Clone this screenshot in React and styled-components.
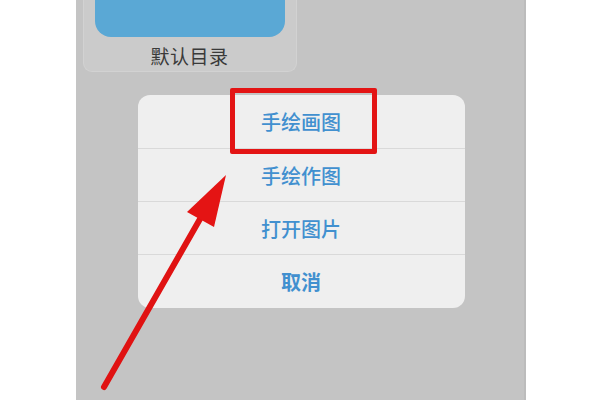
import styled, { createGlobalStyle } from "styled-components";

const Global = createGlobalStyle`
  html, body { margin: 0; padding: 0; background: #ffffff; }
  body { font-family: "Noto Sans CJK SC", "Noto Sans", sans-serif; }
`;

const Page = styled.div`
  position: relative;
  width: 600px;
  height: 400px;
  overflow: hidden;
  display: flex;
  justify-content: center;
  background: #ffffff;
`;

const Panel = styled.div`
  width: 450px;
  height: 400px;
  margin-left: 1px;
  background: #c4c4c4;
  border-right: 2px solid #bcbcbc;
  box-sizing: border-box;
  display: flex;
  flex-direction: column;
`;

const FolderCard = styled.div`
  margin-left: 7px;
  width: 214px;
  height: 72px;
  background: #cbcbcb;
  border: 1px solid #d2d2d2;
  border-top: none;
  border-radius: 0 0 9px 9px;
  box-sizing: border-box;
  display: flex;
  flex-direction: column;
  align-items: center;
`;

const FolderCover = styled.div`
  margin-left: 1px;
  width: 190px;
  height: 37px;
  background: #5aa8d5;
  border-radius: 0 0 16px 16px;
`;

const FolderName = styled.span`
  margin-top: 8px;
  font-size: 19px;
  line-height: 22px;
  color: #3a3a3a;
  letter-spacing: 0.5px;
`;

const Sheet = styled.div`
  margin: 23px 0 0 62px;
  width: 327px;
  background: #efefef;
  border-radius: 12px;
  overflow: hidden;
  display: flex;
  flex-direction: column;
`;

const Option = styled.div`
  height: ${(p) => p.$h}px;
  display: flex;
  align-items: center;
  justify-content: center;
  font-size: 20px;
  font-weight: ${(p) => (p.$bold ? 700 : 500)};
  color: #4190cf;
  & + & { border-top: 1.5px solid #d9d9d9; }
  box-sizing: border-box;
`;

const Highlight = styled.div`
  position: absolute;
  left: 230px;
  top: 88px;
  width: 147px;
  height: 66px;
  border: 5px solid #e31414;
  box-sizing: border-box;
  border-radius: 2px;
`;

const Overlay = styled.svg`
  position: absolute;
  left: 0;
  top: 0;
  pointer-events: none;
`;

export default function App() {
  const options = [
    { label: "手绘画图", h: 53 },
    { label: "手绘作图", h: 53 },
    { label: "打开图片", h: 53 },
    { label: "取消", h: 54, bold: true },
  ];
  return (
    <>
      <Global />
      <Page>
        <Panel>
          <FolderCard>
            <FolderCover />
            <FolderName>默认目录</FolderName>
          </FolderCard>
          <Sheet>
            {options.map((o) => (
              <Option key={o.label} $h={o.h} $bold={o.bold}>
                {o.label}
              </Option>
            ))}
          </Sheet>
        </Panel>
        <Highlight />
        <Overlay width="600" height="400" viewBox="0 0 600 400">
          <line x1="104" y1="387" x2="204" y2="212" stroke="#e01212" strokeWidth="6" strokeLinecap="round" />
          <polygon points="226,175 187,212 214,227" fill="#e41414" />
        </Overlay>
      </Page>
    </>
  );
}
